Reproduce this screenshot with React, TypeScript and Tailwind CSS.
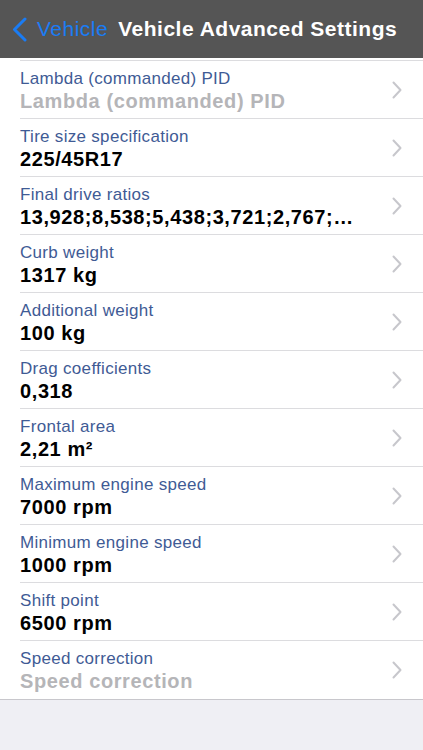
const rows = [
  { label: "Lambda (commanded) PID", value: "Lambda (commanded) PID", placeholder: true },
  { label: "Tire size specification", value: "225/45R17" },
  { label: "Final drive ratios", value: "13,928;8,538;5,438;3,721;2,767;…" },
  { label: "Curb weight", value: "1317 kg" },
  { label: "Additional weight", value: "100 kg" },
  { label: "Drag coefficients", value: "0,318" },
  { label: "Frontal area", value: "2,21 m²" },
  { label: "Maximum engine speed", value: "7000 rpm" },
  { label: "Minimum engine speed", value: "1000 rpm" },
  { label: "Shift point", value: "6500 rpm" },
  { label: "Speed correction", value: "Speed correction", placeholder: true },
];

function Chevron({ className }: { className?: string }) {
  return (
    <svg viewBox="0 0 10 18" className={className} fill="none" stroke="currentColor" strokeWidth="2" strokeLinecap="round" strokeLinejoin="round">
      <path d="M1.5 1.5L8.5 9l-7 7.5" />
    </svg>
  );
}

export default function App() {
  return (
    <div className="flex h-[750px] w-[423px] flex-col overflow-hidden bg-[#efeff4] font-['Liberation_Sans',Arial,sans-serif]">
      <div className="flex h-[58px] shrink-0 items-center bg-[#555555]">
        <div className="flex items-center pl-[12px] text-[#1a7cf4]">
          <svg viewBox="0 0 15 25" className="h-[25px] w-[15px]" fill="none" stroke="currentColor" strokeWidth="3" strokeLinecap="round" strokeLinejoin="round">
            <path d="M13 2L2.5 12.5 13 23" />
          </svg>
          <span className="ml-[10px] text-[21px] tracking-[0.5px]">Vehicle</span>
        </div>
        <span className="ml-[10px] text-[21px] font-bold tracking-[0.5px] text-white">Vehicle Advanced Settings</span>
      </div>
      <div className="border-b border-[#c8c7cc] bg-white">
        <div className="ml-[20px] h-[3px] border-b border-[#dcdcdf]" />
        {rows.map((row, i) => (
          <div key={row.label} className="flex h-[58px] items-center pl-[20px]">
            <div className={`flex h-full min-w-0 flex-1 items-center pr-[21px] ${i < rows.length - 1 ? "border-b border-[#dcdcdf]" : ""}`}>
              <div className="min-w-0 flex-1 pt-[2px]">
                <div className="text-[17px] leading-[21px] tracking-[0.3px] text-[#3f5b95]">{row.label}</div>
                <div className={`whitespace-nowrap text-[20px] font-bold leading-[25px] tracking-[0.6px] ${row.placeholder ? "text-[#b5b5b8]" : "text-black"}`}>
                  {row.value}
                </div>
              </div>
              <Chevron className="h-[18px] w-[10px] text-[#c7c7cc]" />
            </div>
          </div>
        ))}
      </div>
    </div>
  );
}
